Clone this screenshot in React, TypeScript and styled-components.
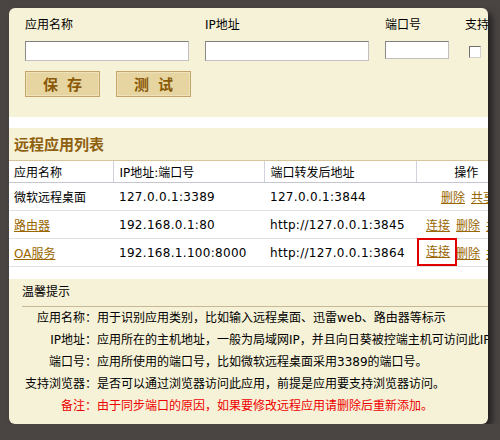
import * as React from "react";
import styled, { createGlobalStyle } from "styled-components";

const GlobalStyle = createGlobalStyle`
  html, body {
    margin: 0;
    padding: 0;
    background: #4a4543;
    font-family: "DejaVu Sans", "Noto Sans CJK SC", sans-serif;
    font-size: 12px;
    color: #000;
  }
`;

const Panel = styled.div`
  margin: 8px 0 0 9px;
  width: 479px;
  height: 416px;
  border-radius: 6px;
  overflow: hidden;
  background: #f6f2d7;
  box-shadow: 4px 4px 6px rgba(0, 0, 0, 0.55);
  display: flex;
  flex-direction: column;
`;

const Form = styled.div`
  padding: 10px 0 20px 16px;
  display: flex;
  flex-direction: column;
  gap: 10px;
`;

const FieldRow = styled.div`
  display: flex;
  gap: 16px;
  white-space: nowrap;
`;

const Field = styled.div<{ $w: number }>`
  width: ${(p) => p.$w}px;
  flex-shrink: 0;
  display: flex;
  flex-direction: column;
`;

const Label = styled.div`
  line-height: 14px;
  height: 14px;
  margin-bottom: 9px;
`;

const Input = styled.div<{ $h?: number }>`
  height: ${(p) => p.$h ?? 20}px;
  box-sizing: border-box;
  background: #fff;
  border: 1px solid #c0c0c0;
  border-top-color: #7f7f7f;
  border-left-color: #8a8a8a;
`;

const Check = styled.div`
  width: 12px;
  height: 12px;
  margin: 5px 0 0 4px;
  box-sizing: border-box;
  background: #fff;
  border: 1px solid #d0d0d0;
  border-top-color: #707070;
  border-left-color: #707070;
`;

const ButtonRow = styled.div`
  display: flex;
  gap: 16px;
`;

const Button = styled.button`
  width: 75px;
  height: 26px;
  padding: 0;
  background: #e6d5a0;
  border: 1px solid #c4a468;
  box-shadow: inset 0 0 0 1px #efe2b8;
  color: #8a5a08;
  font-family: "Noto Sans CJK SC", sans-serif;
  font-weight: bold;
  font-size: 15px;
  letter-spacing: 9px;
  text-indent: 9px;
  line-height: 24px;
`;

const WhiteGap = styled.div<{ $h: number }>`
  height: ${(p) => p.$h}px;
  background: #fff;
  flex-shrink: 0;
`;

const SectionTitle = styled.div`
  height: 32px;
  border-bottom: 1px solid #d6c49c;
  padding-left: 5px;
  line-height: 32px;
  font-family: "Noto Sans CJK SC", sans-serif;
  font-size: 15px;
  font-weight: bold;
  color: #8f5f10;
  flex-shrink: 0;
`;

const Table = styled.table`
  width: 507px;
  border-collapse: collapse;
  table-layout: fixed;
  background: #fff;
  flex-shrink: 0;
`;

const Th = styled.th<{ $center?: boolean }>`
  height: 21px;
  padding: 0 6px;
  font-weight: normal;
  text-align: ${(p) => (p.$center ? "center" : "left")};
  border-bottom: 1px solid #c6c6d0;
  border-left: 1px solid #d2d2dc;
  white-space: nowrap;
  &:first-child {
    border-left: none;
    padding-left: 5px;
  }
`;

const Td = styled.td<{ $center?: boolean }>`
  height: 27px;
  padding: 0 6px;
  letter-spacing: 0.3px;
  text-align: ${(p) => (p.$center ? "center" : "left")};
  border-bottom: 1px solid #e2e2e2;
  white-space: nowrap;
  &:first-child {
    padding-left: 5px;
    letter-spacing: 0;
  }
`;

const Link = styled.a`
  color: #996600;
  text-decoration: underline;
  cursor: pointer;
`;

const Ops = styled.span`
  display: inline-flex;
  gap: 6px;
  margin-left: 4px;
  letter-spacing: 0;
`;

const Highlight = styled.span`
  position: relative;
  display: inline-block;
  line-height: 16px;
  &::after {
    content: "";
    position: absolute;
    left: -9px;
    right: -7px;
    top: -6px;
    bottom: -5px;
    border: 2px solid #e00000;
  }
`;

const Tips = styled.div`
  flex: 1;
  padding-top: 6px;
`;

const TipsTitle = styled.div`
  margin-left: 13px;
  line-height: 14px;
  padding-bottom: 7px;
  border-bottom: 1px solid #c9b896;
`;

const TipRow = styled.div<{ $red?: boolean }>`
  display: flex;
  line-height: 22px;
  white-space: nowrap;
  color: ${(p) => (p.$red ? "#ee0000" : "#000")};
`;

const TipLabel = styled.span`
  width: 72px;
  margin-left: 16px;
  flex-shrink: 0;
  text-align: right;
`;

const rows = [
  {
    name: "微软远程桌面",
    link: false,
    addr: "127.0.0.1:3389",
    fwd: "127.0.0.1:3844",
    ops: ["删除", "共享"],
  },
  {
    name: "路由器",
    link: true,
    addr: "192.168.0.1:80",
    fwd: "http://127.0.0.1:3845",
    ops: ["连接", "删除", "共享"],
  },
  {
    name: "OA服务",
    link: true,
    addr: "192.168.1.100:8000",
    fwd: "http://127.0.0.1:3864",
    ops: ["连接", "删除", "共享"],
    mark: true,
  },
];

const tips = [
  { label: "应用名称：", text: "用于识别应用类别，比如输入远程桌面、迅雷web、路由器等标示" },
  { label: "IP地址：", text: "应用所在的主机地址，一般为局域网IP，并且向日葵被控端主机可访问此IP地址。" },
  { label: "端口号：", text: "应用所使用的端口号，比如微软远程桌面采用3389的端口号。" },
  { label: "支持浏览器：", text: "是否可以通过浏览器访问此应用，前提是应用要支持浏览器访问。" },
];

export default function App() {
  return (
    <>
      <GlobalStyle />
      <Panel>
        <Form>
          <FieldRow>
            <Field $w={164}>
              <Label>应用名称</Label>
              <Input />
            </Field>
            <Field $w={164}>
              <Label>IP地址</Label>
              <Input />
            </Field>
            <Field $w={64}>
              <Label>端口号</Label>
              <Input $h={18} />
            </Field>
            <Field $w={80}>
              <Label>支持浏览器</Label>
              <Check />
            </Field>
          </FieldRow>
          <ButtonRow>
            <Button>保存</Button>
            <Button>测试</Button>
          </ButtonRow>
        </Form>
        <WhiteGap $h={11} />
        <SectionTitle>远程应用列表</SectionTitle>
        <Table>
          <colgroup>
            <col style={{ width: 104 }} />
            <col style={{ width: 151 }} />
            <col style={{ width: 152 }} />
            <col style={{ width: 100 }} />
          </colgroup>
          <thead>
            <tr>
              <Th>应用名称</Th>
              <Th>IP地址:端口号</Th>
              <Th>端口转发后地址</Th>
              <Th $center>操作</Th>
            </tr>
          </thead>
          <tbody>
            {rows.map((r) => (
              <tr key={r.name}>
                <Td>{r.link ? <Link>{r.name}</Link> : r.name}</Td>
                <Td>{r.addr}</Td>
                <Td>{r.fwd}</Td>
                <Td $center>
                  <Ops>
                    {r.ops.map((o, i) =>
                      r.mark && i === 0 ? (
                        <Highlight key={o}>
                          <Link>{o}</Link>
                        </Highlight>
                      ) : (
                        <Link key={o}>{o}</Link>
                      )
                    )}
                  </Ops>
                </Td>
              </tr>
            ))}
          </tbody>
        </Table>
        <WhiteGap $h={12} />
        <Tips>
          <TipsTitle>温馨提示</TipsTitle>
          {tips.map((t) => (
            <TipRow key={t.label}>
              <TipLabel>{t.label}</TipLabel>
              <span>{t.text}</span>
            </TipRow>
          ))}
          <TipRow $red>
            <TipLabel>备注：</TipLabel>
            <span>由于同步端口的原因，如果要修改远程应用请删除后重新添加。</span>
          </TipRow>
        </Tips>
      </Panel>
    </>
  );
}
